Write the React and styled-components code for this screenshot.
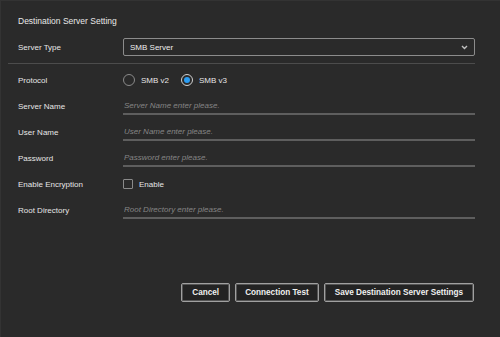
import React, { useState } from 'react'
import styled, { createGlobalStyle } from 'styled-components'

const GlobalStyle = createGlobalStyle`
  html, body {
    margin: 0;
    padding: 0;
    background: #2a2a2a;
  }
  body {
    font-family: "Liberation Sans", Arial, sans-serif;
    color: #e6e6e6;
  }
`

const Page = styled.div`
  box-sizing: border-box;
  height: 337px;
  width: 500px;
  display: flex;
  flex-direction: column;
  padding: 7px 25px 35px 7px;
  background: #2a2a2a;
  border-top: 1px solid #333;
  border-left: 1px solid #333;
`

const Title = styled.div`
  height: 26px;
  display: flex;
  align-items: center;
  padding-left: 10px;
  font-size: 8.5px;
  color: #e8e8e8;
`

const Row = styled.div`
  display: grid;
  grid-template-columns: 115px 1fr;
  align-items: center;
  height: 26px;
`

const Label = styled.div`
  padding-left: 10px;
  font-size: 8px;
  color: #e6e6e6;
`

const Divider = styled.hr`
  margin: 3px 0;
  border: 0;
  border-top: 1px solid #4c4c4c;
`

const SelectBox = styled.div`
  box-sizing: border-box;
  height: 18px;
  border: 1px solid #8c8c8c;
  border-radius: 2px;
  display: flex;
  align-items: center;
  justify-content: space-between;
  padding: 0 6px 0 6px;
  font-size: 8px;
  color: #eee;
`

const Chevron = () => (
  <svg width="7" height="5" viewBox="0 0 7 5">
    <path d="M1 1 L3.5 3.5 L6 1" fill="none" stroke="#c0c0c0" strokeWidth="1.4" />
  </svg>
)

const Options = styled.div`
  display: flex;
  align-items: center;
  gap: 12px;
`

const Choice = styled.label`
  display: flex;
  align-items: center;
  gap: 6px;
  font-size: 8px;
  color: #e6e6e6;
  cursor: pointer;
`

const Radio = styled.span`
  box-sizing: border-box;
  width: 12px;
  height: 12px;
  border-radius: 50%;
  border: 1px solid ${(p) => (p.checked ? '#d0d0d0' : '#8a8a8a')};
  display: flex;
  align-items: center;
  justify-content: center;
  &::after {
    content: '';
    width: 6px;
    height: 6px;
    border-radius: 50%;
    background: ${(p) => (p.checked ? '#2a9df4' : 'transparent')};
  }
`

const Box = styled.span`
  box-sizing: border-box;
  width: 10px;
  height: 10px;
  border: 1px solid #8a8a8a;
  border-radius: 1px;
`

const TextInput = styled.input`
  box-sizing: border-box;
  width: 100%;
  height: 16px;
  margin-top: 2px;
  padding: 0 0 2px 1px;
  background: transparent;
  border: 0;
  border-bottom: 2px solid #5e5e5e;
  outline: none;
  font-family: "Liberation Sans", Arial, sans-serif;
  font-size: 8px;
  color: #eee;
  &::placeholder {
    font-style: italic;
    color: #858585;
  }
`

const Actions = styled.div`
  margin-top: auto;
  display: flex;
  justify-content: flex-end;
  gap: 5px;
  padding-right: 1px;
`

const Button = styled.button`
  box-sizing: border-box;
  height: 19px;
  padding: 0 ${(p) => p.pad}px;
  background: #232323;
  border: 1px solid #a0a0a0;
  border-radius: 2px;
  box-shadow: inset 0 0 0 1px #555;
  font-family: "Liberation Sans", Arial, sans-serif;
  font-size: 8.2px;
  font-weight: bold;
  color: #f0f0f0;
  cursor: pointer;
`

const fields = [
  ['Server Name', 'Server Name enter please.'],
  ['User Name', 'User Name enter please.'],
  ['Password', 'Password enter please.'],
]

export default function App() {
  const [protocol, setProtocol] = useState('v3')
  return (
    <>
      <GlobalStyle />
      <Page>
        <Title>Destination Server Setting</Title>
        <Row>
          <Label>Server Type</Label>
          <SelectBox>
            <span>SMB Server</span>
            <Chevron />
          </SelectBox>
        </Row>
        <Divider />
        <Row>
          <Label>Protocol</Label>
          <Options>
            <Choice onClick={() => setProtocol('v2')}>
              <Radio checked={protocol === 'v2'} />
              SMB v2
            </Choice>
            <Choice onClick={() => setProtocol('v3')}>
              <Radio checked={protocol === 'v3'} />
              SMB v3
            </Choice>
          </Options>
        </Row>
        {fields.map(([label, ph]) => (
          <Row key={label}>
            <Label>{label}</Label>
            <TextInput placeholder={ph} type={label === 'Password' ? 'password' : 'text'} />
          </Row>
        ))}
        <Row>
          <Label>Enable Encryption</Label>
          <Choice>
            <Box />
            Enable
          </Choice>
        </Row>
        <Row>
          <Label>Root Directory</Label>
          <TextInput placeholder="Root Directory enter please." />
        </Row>
        <Actions>
          <Button pad={10}>Cancel</Button>
          <Button pad={9}>Connection Test</Button>
          <Button pad={10}>Save Destination Server Settings</Button>
        </Actions>
      </Page>
    </>
  )
}
